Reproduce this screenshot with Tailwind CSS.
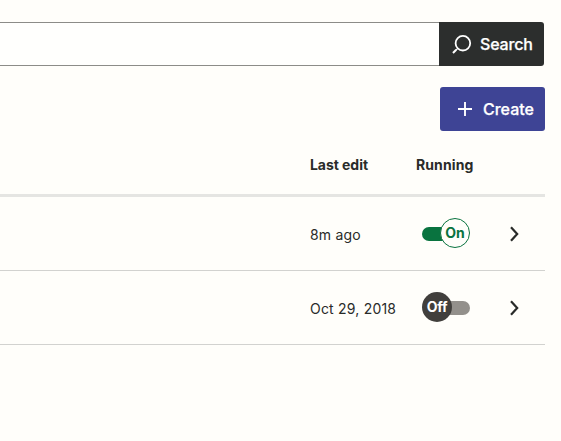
<!DOCTYPE html>
<html lang="en">
<head>
<meta charset="utf-8">
<title>Runs</title>
<script src="https://cdn.jsdelivr.net/npm/@tailwindcss/browser@4"></script>
</head>
<body class="bg-[#fffefa] font-['Inter',sans-serif] text-[#292b29] w-[561px] h-[441px] overflow-hidden">
<main class="w-[545px] pt-[22px]">
  <div class="flex h-11 w-[544px]">
    <input aria-label="Search" class="flex-1 min-w-0 border-y border-[#8c8c88] bg-[#fffffd]">
    <button class="w-[105px] bg-[#2c2e2d] text-white rounded-r-[3px] flex items-center pl-[13px] gap-[7px] font-medium text-base">
      <svg class="w-[21px] h-[21px] shrink-0" viewBox="0 0 21 21" fill="none" stroke="currentColor"><circle cx="10.9" cy="9.2" r="7.3" stroke-width="1.8"/><path d="M5.8 14.4L4 16.2" stroke-width="1.2"/><path d="M4.2 15.8L1 18.9" stroke-width="2.1"/></svg>
      <span class="tracking-[-0.18px] [-webkit-text-stroke:0.25px_white]">Search</span>
    </button>
  </div>
  <div class="flex justify-end mt-[21px]">
    <button class="w-[105px] h-11 bg-[#3e4495] text-white rounded-[3px] flex items-center pl-[17px] gap-[10px] font-medium text-base">
      <svg class="w-4 h-4 shrink-0" viewBox="0 0 16 16" stroke="currentColor" stroke-width="1.9"><path d="M8 1v14M1 8h14"/></svg>
      <span class="[-webkit-text-stroke:0.25px_white]">Create</span>
    </button>
  </div>
  <div class="h-[66px] pt-1 border-b-3 border-[#e5e5e2] grid grid-cols-[310px_106px_1fr] items-center text-sm font-bold">
    <span></span><span class="tracking-[-0.05px]">Last edit</span><span class="tracking-[0.1px]">Running</span>
  </div>
  <div class="h-[74px] border-b border-[#d2d2cf] grid grid-cols-[310px_112px_86.5px_1fr] items-center text-sm">
    <span></span>
    <span class="pt-[2px] tracking-[0.2px]">8m ago</span>
    <span class="flex items-center pb-px">
      <span class="w-[30px] h-[14px] mt-px bg-[#09733f] rounded-full"></span>
      <span class="-ml-3 size-[30px] shrink-0 rounded-full border border-[#09733f] bg-[#fffefa] text-[#09733f] font-bold flex items-center justify-center">On</span>
    </span>
    <svg class="w-3 h-4" viewBox="0 0 12 16" fill="none" stroke="currentColor" stroke-width="2.2"><path d="M2 1.2l6.2 6.8L2 14.8"/></svg>
  </div>
  <div class="h-[74px] border-b border-[#d2d2cf] grid grid-cols-[310px_112px_86.5px_1fr] items-center text-sm">
    <span></span>
    <span class="pt-[2px] tracking-[0.2px] whitespace-nowrap">Oct 29, 2018</span>
    <span class="flex items-center pb-px">
      <span class="relative size-[30px] shrink-0 rounded-full bg-[#413f3c] text-white font-bold tracking-[-0.3px] flex items-center justify-center z-10">Off</span>
      <span class="-ml-3 mt-px w-[30px] h-[14px] bg-[#93908b] rounded-full"></span>
    </span>
    <svg class="w-3 h-4" viewBox="0 0 12 16" fill="none" stroke="currentColor" stroke-width="2.2"><path d="M2 1.2l6.2 6.8L2 14.8"/></svg>
  </div>
</main>
</body>
</html>
